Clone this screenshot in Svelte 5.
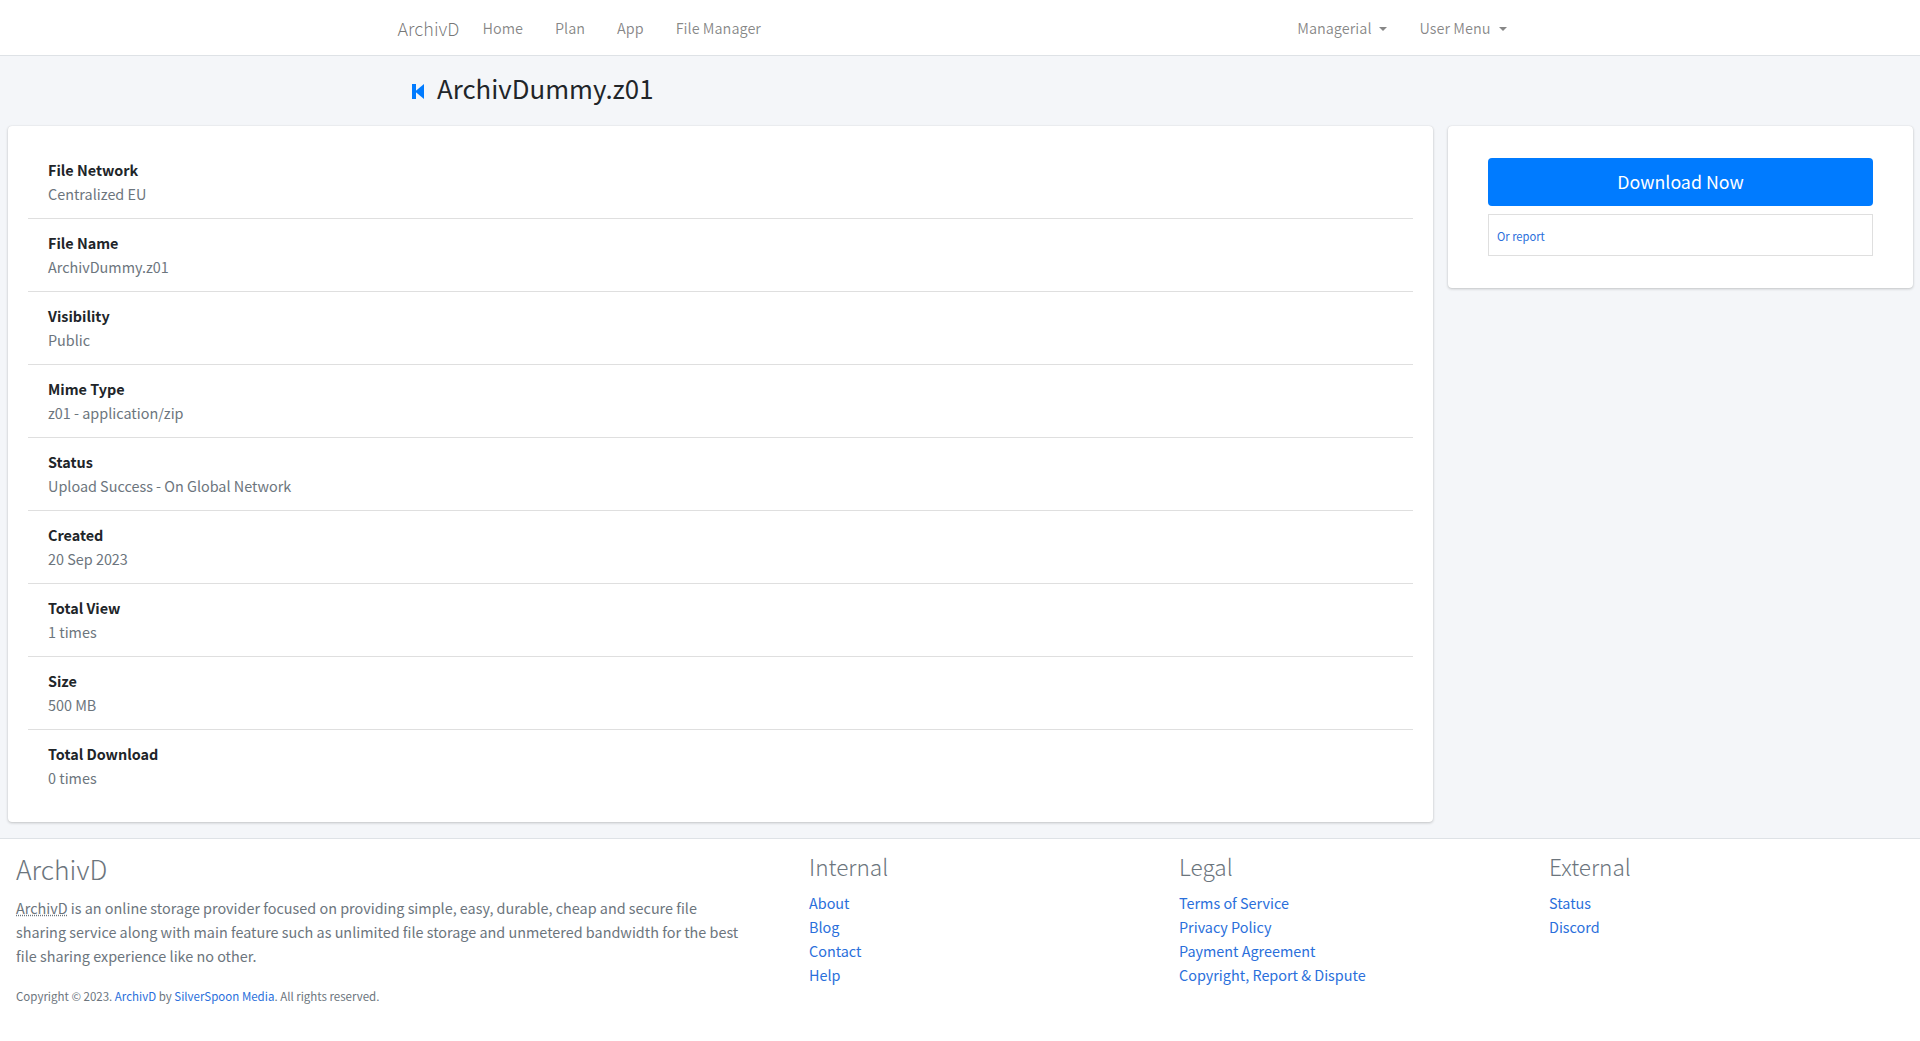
<script>
  const fileRows = [
    ['File Network', 'Centralized EU'],
    ['File Name', 'ArchivDummy.z01'],
    ['Visibility', 'Public'],
    ['Mime Type', 'z01 - application/zip'],
    ['Status', 'Upload Success - On Global Network'],
    ['Created', '20 Sep 2023'],
    ['Total View', '1 times'],
    ['Size', '500 MB'],
    ['Total Download', '0 times']
  ];

  const footerCols = [
    { title: 'Internal', links: ['About', 'Blog', 'Contact', 'Help'] },
    { title: 'Legal', links: ['Terms of Service', 'Privacy Policy', 'Payment Agreement', 'Copyright, Report & Dispute'] },
    { title: 'External', links: ['Status', 'Discord'] }
  ];
</script>

<nav class="navbar">
  <div class="container nav-inner">
    <a class="brand" href="#home">ArchivD</a>
    <ul class="nav-links">
      <li><a href="#home">Home</a></li>
      <li><a href="#plan">Plan</a></li>
      <li><a href="#app">App</a></li>
      <li><a href="#files">File Manager</a></li>
    </ul>
    <ul class="nav-links nav-right">
      <li><a class="dropdown" href="#managerial">Managerial</a></li>
      <li><a class="dropdown" href="#user">User Menu</a></li>
    </ul>
  </div>
</nav>

<header class="page-head">
  <div class="container title-row">
    <svg class="back-icon" width="12" height="15" viewBox="0 0 12 15">
      <rect x="0" y="0" width="4" height="15" fill="#007bff" />
      <path d="M12 0V15L3 7.5z" fill="#007bff" />
    </svg>
    <h1>ArchivDummy.z01</h1>
  </div>
</header>

<main class="content">
  <section class="card info-card">
    <ul class="info-list">
      {#each fileRows as [label, value]}
        <li>
          <b>{label}</b>
          <span>{value}</span>
        </li>
      {/each}
    </ul>
  </section>
  <aside class="card side-card">
    <a class="download-btn" href="#download">Download Now</a>
    <div class="report-box"><a href="#report">Or report</a></div>
  </aside>
</main>

<footer class="footer">
  <div class="about">
    <h2>ArchivD</h2>
    <p><abbr title="ArchivD">ArchivD</abbr> is an online storage provider focused on providing simple, easy, durable, cheap and secure file sharing service along with main feature such as unlimited file storage and unmetered bandwidth for the best file sharing experience like no other.</p>
    <small>Copyright © 2023. <a href="#home">ArchivD</a> by <a href="#ss">SilverSpoon Media</a>. All rights reserved.</small>
  </div>
  {#each footerCols as col}
    <div class="foot-col">
      <h3>{col.title}</h3>
      {#each col.links as link}
        <a href="#link">{link}</a>
      {/each}
    </div>
  {/each}
</footer>

<style>
  :global(body) {
    background: #f4f6f9;
    color: #6c757d;
    font-family: "Noto Sans CJK SC", "Noto Sans", sans-serif;
    font-size: 14.4px;
    line-height: 24px;
  }

  a {
    color: #2a6fdb;
    text-decoration: none;
  }

  ul {
    list-style: none;
    margin: 0;
    padding: 0;
  }

  .container {
    box-sizing: border-box;
    width: 1140px;
    margin: 0 auto;
    padding: 0 7.5px;
  }

  .navbar {
    background: #fff;
    border-bottom: 1px solid #dee2e6;
    height: 55px;
  }

  .nav-inner {
    display: flex;
    align-items: center;
    height: 55px;
  }

  .brand {
    color: rgba(0, 0, 0, 0.55);
    font-size: 18px;
    font-weight: 300;
    margin-right: 7px;
  }

  .nav-links {
    display: flex;
  }

  .nav-links a {
    color: rgba(0, 0, 0, 0.47);
    display: block;
    padding: 0 16px;
  }

  .nav-right {
    margin-left: auto;
  }

  .dropdown::after {
    content: "";
    display: inline-block;
    margin-left: 8px;
    vertical-align: 3px;
    border-top: 4px solid;
    border-left: 4px solid transparent;
    border-right: 4px solid transparent;
  }

  .page-head {
    height: 70px;
  }

  .title-row {
    display: flex;
    align-items: center;
    height: 64px;
  }

  .back-icon {
    margin: 7px 13px 0 14.5px;
  }

  h1 {
    color: #212529;
    font-size: 25.8px;
    font-weight: 400;
    line-height: 34px;
    margin: 0;
  }

  .content {
    align-items: flex-start;
    display: grid;
    gap: 15px;
    grid-template-columns: 1425px 465px;
    padding: 0 7px 16px 8px;
  }

  .card {
    background: #fff;
    border-radius: 4px;
    box-shadow: 0 0 1px rgba(0, 0, 0, 0.125), 0 1px 3px rgba(0, 0, 0, 0.2);
  }

  .info-card {
    padding: 20px;
  }

  .info-list li {
    border-bottom: 1px solid #dfdfdf;
    display: flex;
    flex-direction: column;
    padding: 12px 20px;
  }

  .info-list li:last-child {
    border-bottom: 0;
  }

  .info-list b {
    color: #212529;
    font-weight: 700;
  }

  .side-card {
    padding: 32px 40px;
  }

  .download-btn {
    background: #007bff;
    border-radius: 4px;
    color: #fff;
    display: block;
    font-size: 17.8px;
    line-height: 46px;
    padding-bottom: 2px;
    text-align: center;
  }

  .report-box {
    border: 1px solid #dfdfdf;
    font-size: 11.2px;
    line-height: 18px;
    margin-top: 8px;
    padding: 12px 8px 10px;
  }

  .footer {
    background: #fff;
    border-top: 1px solid #dee2e6;
    display: grid;
    grid-template-columns: 793px 370px 370px 1fr;
    height: 202px;
    padding-left: 16px;
  }

  .about {
    padding-right: 66px;
  }

  .about h2 {
    font-size: 26.5px;
    font-weight: 300;
    line-height: 34px;
    margin: 13px 0 10px;
  }

  .about p {
    margin: 0 0 18px;
  }

  abbr {
    text-decoration: underline dotted;
  }

  small {
    display: block;
    font-size: 11.5px;
    line-height: 20px;
  }

  .foot-col {
    display: flex;
    flex-direction: column;
    align-items: flex-start;
  }

  .foot-col h3 {
    font-size: 22.6px;
    font-weight: 300;
    line-height: 29px;
    margin: 13px 0 10px;
  }
</style>
